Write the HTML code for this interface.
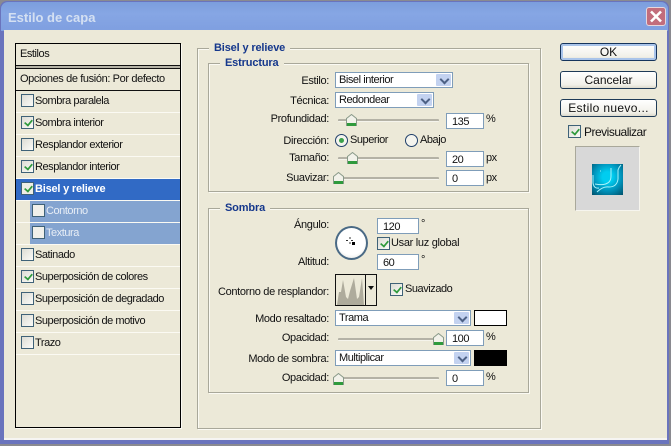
<!DOCTYPE html>
<html><head><meta charset="utf-8"><style>
html,body{margin:0;padding:0;width:671px;height:446px;overflow:hidden;background:#8a8a90}
*{box-sizing:border-box}
body{font-family:"Liberation Sans","DejaVu Sans",sans-serif;font-size:11px;color:#111;position:relative;letter-spacing:-.45px}
div,span,svg{position:absolute}
.t{white-space:nowrap;line-height:14px;height:14px}
.r{text-align:right;width:140px;left:189px;letter-spacing:-.33px}
.row{left:16px;width:164px;height:22px;border-bottom:1px solid #fbfaf3}
.cb{width:13px;height:13px;border:1px solid #3f6278;background:linear-gradient(135deg,#dcdcd4,#fbfbf8)}
.ck:after{content:"";position:absolute;left:2px;top:2px;width:7px;height:4px;border-left:2px solid #2f9a3c;border-bottom:2px solid #2f9a3c;transform:rotate(-50deg) scale(.85)}
.in{left:446px;width:38px;height:16px;background:#fff;border:1px solid #7f9db9;line-height:16px;padding-left:5px;white-space:nowrap}
.sel{left:335px;height:16px;background:#fff;border:1px solid #7f9db9;line-height:15px;padding-left:3px;white-space:nowrap}
.ar{top:1px;right:1px;width:15px;height:12px;background:#c3d2f0;border-radius:1px}
.ar:after{content:"";position:absolute;left:5px;top:2px;width:5px;height:5px;border-right:2px solid #4d6185;border-bottom:2px solid #4d6185;transform:rotate(45deg)}
.tr{left:338px;width:101px;height:3px;background:#b4b2a6;border-bottom:1px solid #f5f4ec;border-radius:1px}
.th{width:11px;height:12px}
.gr{border:1px solid #a9a89a;box-shadow:inset 1px 1px 0 #fbfaf3,1px 1px 0 #fbfaf3}
.lg{background:#ece9d8;padding:0 5px;color:#16388c;font-weight:bold;white-space:nowrap;line-height:13px;height:13px;letter-spacing:-.15px}
.btn{left:560px;width:97px;height:18px;border:1px solid #1f3b57;border-radius:3px;background:linear-gradient(#fff,#f1f0e8 80%,#dcd9cc);text-align:center;line-height:16px;font-size:12px;color:#111;letter-spacing:0}
</style></head><body>
<svg width="0" height="0" style="left:0;top:0"><defs><g id="th"><path d="M.5 4.500L5.500.5 10.500 4.500V11.500H.5Z" fill="#f2f2ea" stroke="#8a9a8a"/><rect x="1" y="9" width="9" height="3" fill="#2f9a3c"/></g></defs></svg>
<!-- window -->
<div style="left:0;top:0;width:671px;height:446px;background:#8a8a90"></div>
<div style="left:0;top:1px;width:669px;height:443px;background:#6a74bd;border-radius:7px 7px 0 0"></div>
<div style="left:1px;top:2px;width:667px;height:29px;background:linear-gradient(#7c9edd,#86a6e4 40%,#7f9fe0);border-radius:7px 7px 0 0"></div>
<div class="t" style="left:8px;top:10px;font-size:13px;font-weight:bold;color:#d4e0f2;letter-spacing:0;height:16px;line-height:16px">Estilo de capa</div>
<div style="left:646px;top:7px;width:20px;height:19px;background:#c26d7c;border:1px solid #e6d6dc;border-radius:3px"></div>
<svg style="left:646px;top:7px" width="20" height="19"><path d="M5 4.500L15 14.500M15 4.500L5 14.500" stroke="#fff" stroke-width="2.600"/></svg>
<div style="left:4px;top:30px;width:663px;height:408px;background:#ece9d8;box-shadow:0 2px 0 #f6f5f2"></div>

<!-- list -->
<div style="left:15px;top:43px;width:166px;height:385px;border:1px solid #000;box-shadow:1px 1px 0 #fbfaf3"></div>
<div class="t" style="left:20px;top:47px">Estilos</div>
<div style="left:16px;top:65px;width:164px;height:4px;border-top:1px solid #111;border-bottom:1px solid #111;background:#b5b3a6"></div>
<div class="t" style="left:20px;top:72px;letter-spacing:-.38px">Opciones de fusión: Por defecto</div>
<div style="left:16px;top:90px;width:164px;height:1px;background:#111"></div>

<div class="row" style="top:91px"></div><div class="cb" style="left:21px;top:94px"></div><div class="t" style="left:35px;top:94px">Sombra paralela</div>
<div class="row" style="top:113px"></div><div class="cb ck" style="left:21px;top:116px"></div><div class="t" style="left:35px;top:116px">Sombra interior</div>
<div class="row" style="top:135px"></div><div class="cb" style="left:21px;top:138px"></div><div class="t" style="left:35px;top:138px">Resplandor exterior</div>
<div class="row" style="top:157px"></div><div class="cb ck" style="left:21px;top:160px"></div><div class="t" style="left:35px;top:160px">Resplandor interior</div>
<div style="left:16px;top:179px;width:164px;height:21px;background:#316ac5"></div><div class="cb ck" style="left:21px;top:182px;background:#eeeee6"></div><div class="t" style="left:35px;top:182px;color:#fff;font-weight:bold;letter-spacing:-.2px">Bisel y relieve</div>
<div style="left:30px;top:201px;width:150px;height:21px;background:#84a4d0"></div><div class="cb" style="left:32px;top:204px;background:#f0f0ea"></div><div class="t" style="left:46px;top:204px;color:#e8eef6">Contorno</div>
<div style="left:30px;top:223px;width:150px;height:21px;background:#84a4d0"></div><div class="cb" style="left:32px;top:226px;background:#f0f0ea"></div><div class="t" style="left:46px;top:226px;color:#e8eef6">Textura</div>
<div style="left:16px;top:200px;width:164px;height:1px;background:#fbfaf3"></div>
<div style="left:16px;top:222px;width:164px;height:1px;background:#fbfaf3"></div>
<div style="left:16px;top:244px;width:164px;height:1px;background:#fbfaf3"></div>
<div class="row" style="top:245px"></div><div class="cb" style="left:21px;top:248px"></div><div class="t" style="left:35px;top:248px">Satinado</div>
<div class="row" style="top:267px"></div><div class="cb ck" style="left:21px;top:270px"></div><div class="t" style="left:35px;top:270px">Superposición de colores</div>
<div class="row" style="top:289px"></div><div class="cb" style="left:21px;top:292px"></div><div class="t" style="left:35px;top:292px">Superposición de degradado</div>
<div class="row" style="top:311px"></div><div class="cb" style="left:21px;top:314px"></div><div class="t" style="left:35px;top:314px">Superposición de motivo</div>
<div class="row" style="top:333px"></div><div class="cb" style="left:21px;top:336px"></div><div class="t" style="left:35px;top:336px">Trazo</div>

<!-- group frames -->
<div class="gr" style="left:197px;top:48px;width:344px;height:381px"></div>
<div class="lg" style="left:209px;top:42px">Bisel y relieve</div>
<div class="gr" style="left:208px;top:63px;width:321px;height:129px"></div>
<div class="lg" style="left:220px;top:57px">Estructura</div>
<div class="gr" style="left:208px;top:208px;width:321px;height:185px"></div>
<div class="lg" style="left:220px;top:202px">Sombra</div>

<!-- estructura -->
<div class="t r" style="top:74px">Estilo:</div>
<div class="sel" style="top:72px;width:118px">Bisel interior<div class="ar"></div></div>
<div class="t r" style="top:94px">Técnica:</div>
<div class="sel" style="top:92px;width:99px">Redondear<div class="ar"></div></div>
<div class="t r" style="top:112px">Profundidad:</div>
<div class="tr" style="top:119px"></div><svg class="th" style="left:346px;top:114px"><use href="#th"/></svg>
<div class="in" style="top:113px">135</div><div class="t" style="left:486px;top:112px">%</div>
<div class="t r" style="top:134px">Dirección:</div>
<div style="left:335px;top:134px;width:13px;height:13px;border-radius:50%;border:1px solid #1f3f6a;background:#f4f4ee"></div>
<div style="left:339px;top:138px;width:5px;height:5px;border-radius:50%;background:#3aa04a"></div>
<div class="t" style="left:350px;top:133px">Superior</div>
<div style="left:405px;top:134px;width:13px;height:13px;border-radius:50%;border:1px solid #1f3f6a;background:#f4f4ee"></div>
<div class="t" style="left:420px;top:133px">Abajo</div>
<div class="t r" style="top:151px">Tamaño:</div>
<div class="tr" style="top:157px"></div><svg class="th" style="left:347px;top:152px"><use href="#th"/></svg>
<div class="in" style="top:151px">20</div><div class="t" style="left:486px;top:151px">px</div>
<div class="t r" style="top:171px">Suavizar:</div>
<div class="tr" style="top:177px"></div><svg class="th" style="left:333px;top:172px"><use href="#th"/></svg>
<div class="in" style="top:170px">0</div><div class="t" style="left:486px;top:171px">px</div>

<!-- sombra -->
<div class="t r" style="top:218px">Ángulo:</div>
<div class="in" style="left:377px;width:42px;top:218px">120</div><div class="t" style="left:421px;top:217px">°</div>
<div style="left:335px;top:226px;width:33px;height:34px;border-radius:50%;border:2px solid #4a6a85;background:radial-gradient(circle at 50% 45%,#fff 60%,#d8d8d0)"></div>
<svg style="left:345px;top:236px" width="14" height="14"><path d="M5 1v2M5 6v2M1 4.500h2M6 4.500h2" stroke="#333" fill="none"/><rect x="7" y="6" width="3" height="3" fill="#000"/></svg>
<div class="cb ck" style="left:377px;top:237px"></div><div class="t" style="left:391px;top:236px;letter-spacing:-.3px">Usar luz global</div>
<div class="t r" style="top:255px">Altitud:</div>
<div class="in" style="left:377px;width:42px;top:254px">60</div><div class="t" style="left:421px;top:253px">°</div>
<div class="t r" style="top:285px">Contorno de resplandor:</div>
<div style="left:335px;top:274px;width:42px;height:32px;border:1px solid #111;background:#ece9d8"></div>
<div style="left:365px;top:274px;width:1px;height:32px;background:#111"></div>
<svg style="left:336px;top:275px" width="29" height="30"><path d="M1 30L3 17 5 17 7 5 10 22 12 24 14 16 18 3 21 24 23 22 26 3 28 30Z" fill="#aeab9c"/></svg>
<svg style="left:368px;top:286px" width="7" height="5"><path d="M0 0h6L3 4Z" fill="#111"/></svg>
<div class="cb ck" style="left:390px;top:283px"></div><div class="t" style="left:405px;top:282px">Suavizado</div>

<div class="t r" style="top:312px">Modo resaltado:</div>
<div class="sel" style="top:310px;width:136px">Trama<div class="ar"></div></div>
<div style="left:474px;top:310px;width:33px;height:16px;background:#fff;border:1px solid #000"></div>
<div class="t r" style="top:331px">Opacidad:</div>
<div class="tr" style="top:338px"></div><svg class="th" style="left:433px;top:333px"><use href="#th"/></svg>
<div class="in" style="top:330px">100</div><div class="t" style="left:486px;top:330px">%</div>
<div class="t r" style="top:352px">Modo de sombra:</div>
<div class="sel" style="top:350px;width:136px">Multiplicar<div class="ar"></div></div>
<div style="left:474px;top:350px;width:33px;height:16px;background:#000"></div>
<div class="t r" style="top:371px">Opacidad:</div>
<div class="tr" style="top:377px"></div><svg class="th" style="left:333px;top:373px"><use href="#th"/></svg>
<div class="in" style="top:370px">0</div><div class="t" style="left:486px;top:370px">%</div>

<!-- buttons -->
<div class="btn" style="top:43px;border-color:#15345c;box-shadow:inset 0 0 0 2px #a9c4ea">OK</div>
<div class="btn" style="top:71px">Cancelar</div>
<div class="btn" style="top:99px;letter-spacing:.35px">Estilo nuevo...</div>
<div class="cb ck" style="left:568px;top:125px"></div>
<div class="t" style="left:584px;top:125px;font-size:12px;letter-spacing:-.5px">Previsualizar</div>
<div style="left:575px;top:146px;width:65px;height:65px;background:#d8d8d8;border-left:1px solid #a9a89a;border-top:1px solid #a9a89a;border-right:1px solid #f6f5ee;border-bottom:1px solid #f6f5ee"></div>
<div style="left:592px;top:164px;width:31px;height:31px;background:radial-gradient(circle at 50% 42%,#00cdf0 22%,#0090b8 60%,#00506a)"></div>
<svg style="left:592px;top:164px" width="31" height="31"><path d="M1 11v8q1 6 6 5 M5 28q6-6 12-5q8 0 9-8V6q1-3 3-5 M8 7h1 M3 20q10 2 14-2q2-2 2-6V4" stroke="#a8f2fa" fill="none" stroke-width="1"/></svg>
</body></html>
